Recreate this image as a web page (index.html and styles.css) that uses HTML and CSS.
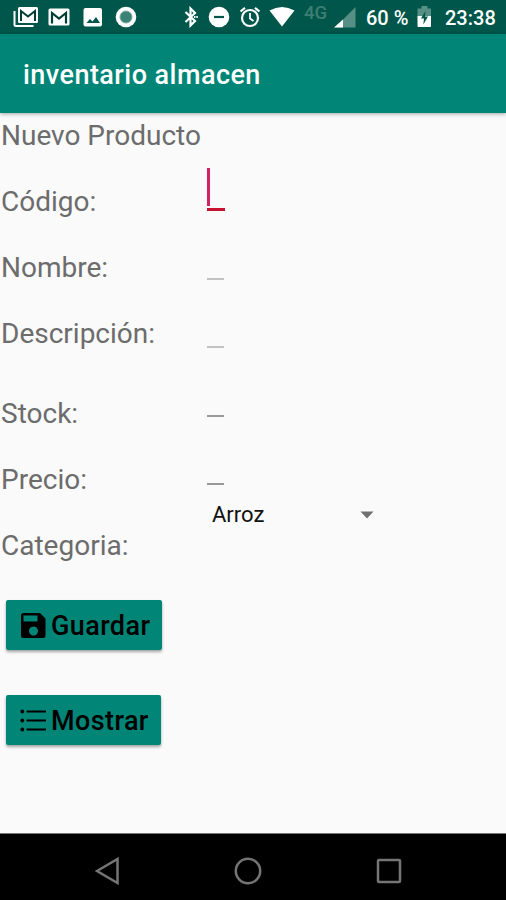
FILE: index.html
```html
<!DOCTYPE html>
<html lang="es">
<head>
<meta charset="utf-8">
<title>inventario almacen</title>
<link rel="stylesheet" href="styles.css">
</head>
<body>
<div class="screen">
  <header class="status">
    <svg class="mails" width="26" height="22" viewBox="0 0 26 22"><path d="M1.500 5v13.500q0 1.500 1.500 1.500H20.500" fill="none" stroke="#fff" stroke-width="2"/><rect x="5" y="1" width="20" height="16" rx="1.500" fill="#fff"/><path d="M8 15V5l7 5.500L22 5v10" fill="none" stroke="#003e34" stroke-width="2"/></svg>
    <svg class="mail" width="22" height="22" viewBox="0 0 22 22"><rect x="0.500" y="2.500" width="21" height="17" rx="1.500" fill="#fff"/><path d="M4 17.500V7l7 5.500L18 7v10.500" fill="none" stroke="#003e34" stroke-width="2.200"/></svg>
    <svg class="photo" width="20" height="22" viewBox="0 0 20 22"><rect x="0.500" y="2" width="18.500" height="18.500" rx="2" fill="#fff"/><path d="M3.500 17l3.500-4 2.500 2.500 3.500-4.500 4 6z" fill="#00564a"/></svg>
    <svg class="disc" width="22" height="22" viewBox="0 0 22 22"><circle cx="11" cy="11" r="10.300" fill="#fff"/><circle cx="11" cy="11" r="6" fill="#3c8377" stroke="#78aaa0"/></svg>
    <svg class="bluetooth" width="14" height="22" viewBox="0 0 14 22"><path d="M1.500 6l9.500 9-4.500 4.500V2.500L11 7l-9.500 9" fill="none" stroke="#fff" stroke-width="2.200"/><path d="M10 11h1.500M12.300 11h1.500" stroke="#fff" stroke-width="2"/></svg>
    <svg class="quiet" width="22" height="22" viewBox="0 0 22 22"><circle cx="11" cy="11" r="10.300" fill="#fff"/><path d="M6 11h10" stroke="#00564a" stroke-width="2.200"/></svg>
    <svg class="alarm" width="22" height="22" viewBox="0 0 22 22"><circle cx="11" cy="12" r="8" fill="none" stroke="#fff" stroke-width="2.200"/><path d="M1.500 5.500L6 1.800M20.500 5.500L16 1.800" stroke="#fff" stroke-width="2.200"/><path d="M11 7v5.500l3.500 2.500" fill="none" stroke="#fff" stroke-width="1.800"/></svg>
    <svg class="wifi" width="26" height="22" viewBox="0 0 26 22"><path d="M.5 4.500Q13-2.500 25.500 4.500L13 20.500z" fill="#fff"/></svg>
    <span class="network">4G</span>
    <svg class="signal" width="22" height="22" viewBox="0 0 22 22"><path d="M1 20.500L21.500 0v20.500z" fill="#568f84"/><path d="M0 20.500l9-8v8z" fill="#fff"/></svg>
    <span class="level">60 %</span>
    <svg class="battery" width="15" height="22" viewBox="0 0 15 22"><path d="M4.500 0h6v2.500H14V10H.5V2.500h4z" fill="#568f84"/><path d="M.5 10H14v10q0 1-1 1H1.500q-1 0-1-1z" fill="#fff"/><path d="M8.500 5L4 12.500h3L6.300 18.500l4.700-8H8z" fill="#00564a"/></svg>
    <span class="clock">23:38</span>
  </header>
  <div class="appbar"><h1>inventario almacen</h1></div>
  <main>
    <p class="label">Nuevo Producto</p>
    <div class="form">
      <div class="labels">
        <p class="label">Código:</p>
        <p class="label">Nombre:</p>
        <p class="label tall">Descripción:</p>
        <p class="label">Stock:</p>
        <p class="label">Precio:</p>
        <p class="label">Categoria:</p>
      </div>
      <div class="fields">
        <div class="field active"><i class="caret"></i></div>
        <div class="field"></div>
        <div class="field"></div>
        <div class="field thin"></div>
        <div class="field thin"></div>
        <div class="spinner"><span>Arroz</span><svg width="14" height="8" viewBox="0 0 14 8"><path d="M.5.500h13L7 7.500z" fill="#707070"/></svg></div>
      </div>
    </div>
    <div class="actions">
      <button class="save"><svg width="27" height="27" viewBox="0 0 27 27"><path fill-rule="evenodd" d="M3.500 1H20l5.500 5.500v17q0 2.500-2.500 2.500H3.500Q1 26 1 23.500v-20Q1 1 3.500 1zM3.500 3.500v6h14v-6zM13.500 14.500a4.500 4.500 0 1 0 .01 0z"/></svg><span>Guardar</span></button>
      <button class="show"><svg width="27" height="27" viewBox="0 0 27 27"><path d="M6.500 4.500H26M6.500 13.500H26M6.500 22.500H26" stroke="#000" stroke-width="2.200"/><circle cx="2.300" cy="4.500" r="1.900"/><circle cx="2.300" cy="13.500" r="1.900"/><circle cx="2.300" cy="22.500" r="1.900"/></svg><span>Mostrar</span></button>
    </div>
  </main>
  <nav>
    <svg class="back" width="26" height="28" viewBox="0 0 26 28"><path d="M2 14L22.500 2v24z" fill="none" stroke="#757575" stroke-width="2.500"/></svg>
    <svg class="home" width="28" height="28" viewBox="0 0 28 28"><circle cx="14" cy="14" r="12.200" fill="none" stroke="#757575" stroke-width="2.500"/></svg>
    <svg class="recent" width="26" height="28" viewBox="0 0 26 28"><rect x="2" y="3" width="22" height="22" rx="1" fill="none" stroke="#757575" stroke-width="2.500"/></svg>
  </nav>
</div>
</body>
</html>
```
FILE: styles.css
```css
* { box-sizing: border-box; }
body { margin: 0; font-family: Roboto, "Liberation Sans", sans-serif; }
h1, p { margin: 0; }
svg { display: block; flex: none; }
.screen { width: 506px; height: 900px; display: flex; flex-direction: column; background: #fafafa; overflow: hidden; }

.status { height: 34px; flex: none; display: flex; align-items: center; padding-left: 13px; background: #00564a; color: #fff; font-size: 20px; font-weight: 500; line-height: 34px; white-space: nowrap; }
.mails { margin-right: -1px; }
.mail { margin-left: 10px; }
.photo { margin-left: 13px; }
.disc { margin-left: 12px; }
.bluetooth { margin-left: 47px; }
.quiet { margin-left: 10px; }
.alarm { margin-left: 9px; }
.wifi { margin-left: 8px; }
.network { width: 24px; margin-left: 9px; line-height: 26px; align-self: flex-start; font-size: 18.5px; color: #3d7e73; }
.signal { margin: 2px 0 0 6px; }
.level { width: 42px; margin: 2px 0 0 10px; }
.battery { margin-left: 9px; }
.clock { margin: 2px 0 0 13px; }

.appbar { height: 79px; flex: none; display: flex; align-items: center; padding: 2px 0 0 23px; background: #008577; box-shadow: 0 1px 4px rgba(0, 0, 0, .35); }
h1 { color: #fff; font-size: 27px; font-weight: 500; line-height: 32px; letter-spacing: .45px; }

main { flex: 1; padding-top: 6px; }
.label { height: 33px; padding-left: 1px; color: #6c6c6c; font-size: 28px; line-height: 33px; white-space: nowrap; }
.form { display: grid; grid-template-columns: 207px 180px; height: 448px; }
.labels { padding-top: 33px; }
.labels .label { height: 66px; }
.labels .tall { height: 80px; }
.fields { padding-top: 16px; }
.field { width: 17px; height: 68.500px; border-bottom: 2px solid #c2c2c2; }
.field.active { width: 18px; height: 43px; border-bottom: 3px solid #c41230; }
.field.thin { border-bottom-color: #999; }
.caret { display: block; width: 3px; height: 38px; background: #d02363; }
.spinner { display: flex; align-items: center; justify-content: space-between; height: 30px; margin-top: 15px; padding: 0 13px 0 5px; font-size: 22px; line-height: 30px; color: #111; }
.actions { display: flex; flex-direction: column; align-items: flex-start; gap: 45px; padding-left: 6px; }
button { display: flex; align-items: center; height: 50px; border: 0; border-radius: 2px; padding: 0 0 0 14px; background: #008577; box-shadow: 0 2px 3px rgba(0, 0, 0, .35); color: #000; font: 500 27px/32px Roboto, "Liberation Sans", sans-serif; letter-spacing: .4px; }
button span { margin-left: 4px; padding-top: 2px; }
.save { width: 156px; }
.show { width: 155px; }

nav { height: 67px; flex: none; display: flex; align-items: center; padding: 7px 0 0 95px; background: #000; border-top: 1px solid #777; }
.home { margin-left: 113px; }
.recent { margin-left: 114px; }
```
